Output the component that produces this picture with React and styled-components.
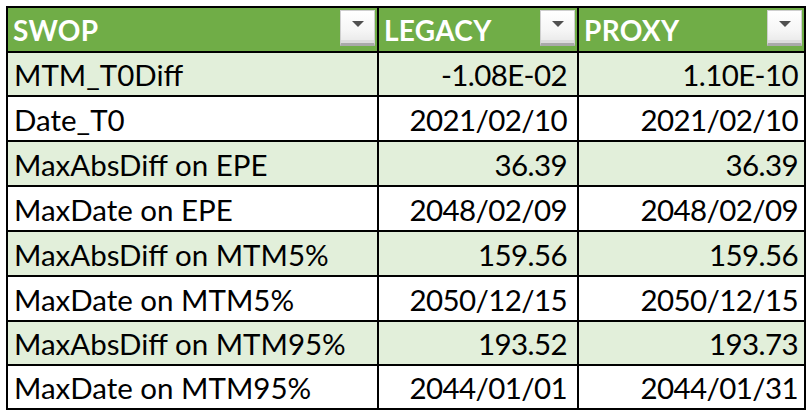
import React from "react";
import styled, { createGlobalStyle } from "styled-components";

const Global = createGlobalStyle`
  html, body { margin: 0; padding: 0; background: #ffffff; }
  body { font-family: Lato, "Noto Sans", sans-serif; }
`;

const Page = styled.div`
  padding: 6px 0 0 6px;
  width: 811px;
  height: 415px;
  box-sizing: border-box;
  background: #ffffff;
`;

const Table = styled.div`
  display: grid;
  width: 800px;
  box-sizing: border-box;
  grid-template-columns: 369px 198px 225px;
  grid-template-rows: 43px 42px 43px 43px 43px 43px 43px 42px 42px;
  gap: 2px;
  padding: 2px;
  background: #000000;
`;

const HeaderCell = styled.div`
  background: #70ad47;
  display: flex;
  align-items: center;
  justify-content: space-between;
  padding: 0 2px 0 5px;
  color: #ffffff;
  font-family: Lato, "Noto Sans", sans-serif;
  font-weight: 700;
  font-size: 28px;
  letter-spacing: 0.3px;
`;

const FilterButton = styled.div`
  align-self: flex-start;
  margin-top: 2px;
  width: 35px;
  height: 36px;
  box-sizing: border-box;
  border: 1px solid #cfcfcf;
  border-bottom: 3px solid #a9a9a9;
  background: linear-gradient(#ffffff 0%, #f6f6f6 60%, #e8e8e8 100%);
  box-shadow: inset 0 -3px 0 #dcdcdc;
  display: flex;
  justify-content: center;
  align-items: flex-start;
  padding-top: 10px;
`;

const Triangle = styled.div`
  width: 0;
  height: 0;
  border-left: 6px solid transparent;
  border-right: 6px solid transparent;
  border-top: 6px solid #505050;
`;

const Cell = styled.div`
  background: ${(p) => (p.$shade ? "#e2efda" : "#ffffff")};
  display: flex;
  align-items: flex-end;
  justify-content: ${(p) => (p.$right ? "flex-end" : "flex-start")};
  padding: 0 ${(p) => p.$pr || 6}px 5px 6px;
  color: #000000;
  font-family: Lato, "Noto Sans", sans-serif;
  font-size: 29.5px;
  line-height: 30px;
  letter-spacing: ${(p) => (p.$right ? "-0.6px" : "0")};
  white-space: nowrap;
`;

const headers = ["SWOP", "LEGACY", "PROXY"];

const rows = [
  ["MTM_T0Diff", "-1.08E-02", "1.10E-10"],
  ["Date_T0", "2021/02/10", "2021/02/10"],
  ["MaxAbsDiff on EPE", "36.39", "36.39"],
  ["MaxDate on EPE", "2048/02/09", "2048/02/09"],
  ["MaxAbsDiff on MTM5%", "159.56", "159.56"],
  ["MaxDate on MTM5%", "2050/12/15", "2050/12/15"],
  ["MaxAbsDiff on MTM95%", "193.52", "193.73"],
  ["MaxDate on MTM95%", "2044/01/01", "2044/01/31"],
];

export default function App() {
  return (
    <Page>
      <Global />
      <Table>
        {headers.map((h) => (
          <HeaderCell key={h}>
            <span>{h}</span>
            <FilterButton>
              <Triangle />
            </FilterButton>
          </HeaderCell>
        ))}
        {rows.map((r, i) => (
          <React.Fragment key={r[0]}>
            <Cell $shade={i % 2 === 0}>{r[0]}</Cell>
            <Cell $shade={i % 2 === 0} $right $pr={10}>{r[1]}</Cell>
            <Cell $shade={i % 2 === 0} $right $pr={6}>{r[2]}</Cell>
          </React.Fragment>
        ))}
      </Table>
    </Page>
  );
}
